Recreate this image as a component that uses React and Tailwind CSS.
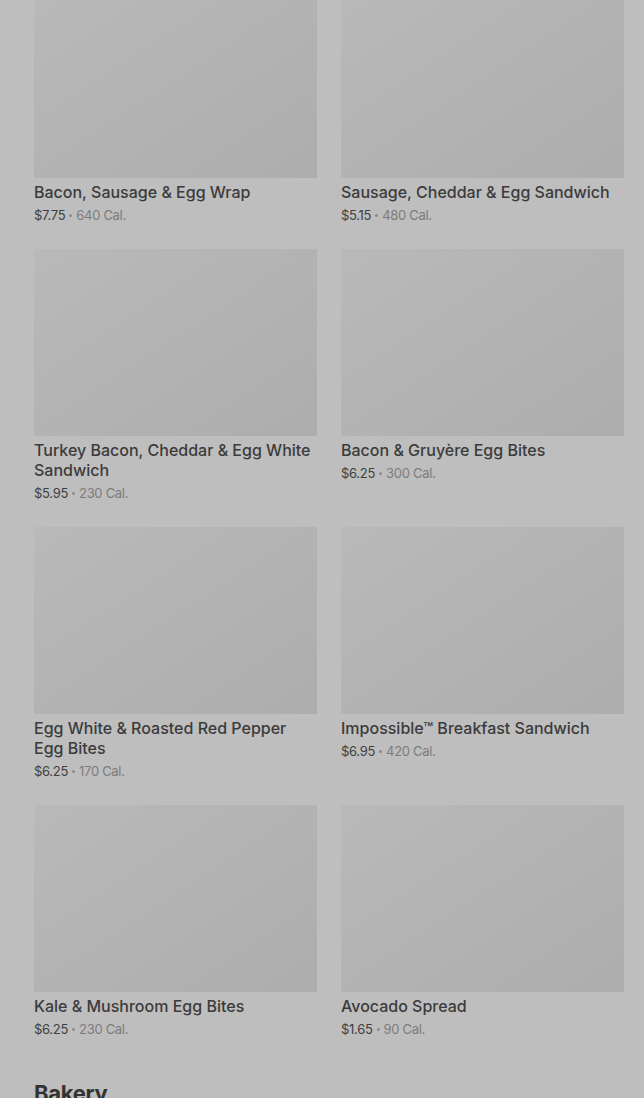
const items = [
  { name: "Bacon, Sausage & Egg Wrap", price: "$7.75", cal: "640 Cal." },
  { name: "Sausage, Cheddar & Egg Sandwich", price: "$5.15", cal: "480 Cal." },
  { name: "Turkey Bacon, Cheddar & Egg White Sandwich", price: "$5.95", cal: "230 Cal." },
  { name: "Bacon & Gruyère Egg Bites", price: "$6.25", cal: "300 Cal." },
  { name: "Egg White & Roasted Red Pepper Egg Bites", price: "$6.25", cal: "170 Cal." },
  { name: "Impossible™ Breakfast Sandwich", price: "$6.95", cal: "420 Cal." },
  { name: "Kale & Mushroom Egg Bites", price: "$6.25", cal: "230 Cal." },
  { name: "Avocado Spread", price: "$1.65", cal: "90 Cal." },
];

function MenuItem({ item }) {
  return (
    <div className="flex flex-col">
      <div className="h-[187px] w-full bg-gradient-to-br from-[#b9b9b9] to-[#adadad]" />
      <h3 className="mt-1 text-[16px] leading-5 font-medium text-[#3b3b3b]">
        {item.name}
      </h3>
      <p className="mt-[3px] flex items-center text-[13px] leading-5 tracking-[-0.3px]">
        <span className="text-[#3f3f3f]">{item.price}</span>
        <span className="mx-[4px] h-[3px] w-[3px] rounded-full bg-[#8a8a8a]" />
        <span className="text-[#7c7c7c]">{item.cal}</span>
      </p>
    </div>
  );
}

export default function App() {
  return (
    <div
      className="h-[1098px] w-full overflow-hidden bg-[#bebebe]"
      style={{ fontFamily: "Inter, 'Liberation Sans', sans-serif" }}
    >
      <div className="-mt-[9px] pl-[34px] pr-[20px]">
        <div className="grid grid-cols-2 gap-x-6 gap-y-6">
          {items.map((item) => (
            <MenuItem key={item.name} item={item} />
          ))}
        </div>
        <h2 className="mt-[38px] text-[22px] leading-8 font-bold tracking-[-0.3px] text-[#333333]">
          Bakery
        </h2>
      </div>
    </div>
  );
}
